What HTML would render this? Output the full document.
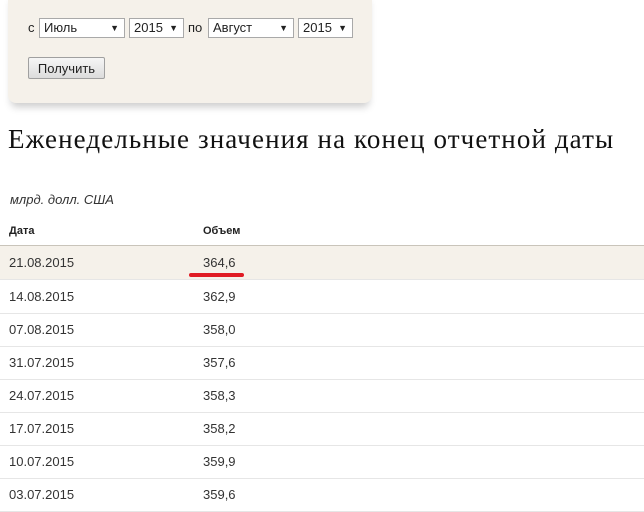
<!DOCTYPE html>
<html><head><meta charset="utf-8"><style>
body{margin:0;background:#fff;font-family:"Liberation Sans",Arial,sans-serif;width:644px;height:509px;overflow:hidden;position:relative;color:#222}
.box{position:absolute;left:8px;top:-10px;width:364px;height:113px;background:#f5f1ea;border-radius:8px;box-shadow:0 7px 8px -3px rgba(0,0,0,.2)}
.a{position:absolute;font-size:13px}
.sel{position:absolute;top:18px;border:1px solid #a9a9a9;background:#fff;font-size:13px;line-height:18px;padding-left:4px;box-sizing:border-box;height:20px}
.sel span{position:absolute;right:5px;top:0;font-size:9px}
.btn{position:absolute;left:28px;top:57px;width:77px;height:22px;border:1px solid #a0a0a0;border-radius:2px;background:linear-gradient(#f6f6f6,#dcdcdc);font-size:13px;text-align:center;line-height:21px;box-sizing:border-box}
h1{position:absolute;left:8px;top:124px;margin:0;font:27px "Liberation Serif",serif;letter-spacing:1.1px;color:#111;white-space:nowrap}
.row{position:absolute;left:0;width:644px;height:33px;border-bottom:1px solid #e6e6e6;font-size:13px;color:#333}
.row div{position:absolute;top:9px}
</style></head><body>
<div class="box"></div>
<div class="a" style="left:28px;top:20px">с</div>
<div class="sel" style="left:39px;width:86px">Июль<span>▼</span></div>
<div class="sel" style="left:129px;width:55px">2015<span>▼</span></div>
<div class="a" style="left:188px;top:20px">по</div>
<div class="sel" style="left:208px;width:86px">Август<span>▼</span></div>
<div class="sel" style="left:298px;width:55px">2015<span>▼</span></div>
<div class="btn">Получить</div>
<h1>Еженедельные значения на конец отчетной даты</h1>
<div class="a" style="left:10px;top:192px;font-style:italic;color:#333">млрд. долл. США</div>
<div class="a" style="left:9px;top:225px;font-size:11px;font-weight:bold">Дата</div>
<div class="a" style="left:203px;top:225px;font-size:11px;font-weight:bold">Объем</div>
<div style="position:absolute;left:0;top:245px;width:644px;height:1px;background:#c9c4ba"></div>
<div class="row" style="top:246px;background:#f5f1ea"><div style="left:9px">21.08.2015</div><div style="left:203px">364,6</div></div>
<div style="position:absolute;left:189px;top:273px;width:55px;height:4px;border-radius:2px;background:#e01b24"></div>
<div class="row" style="top:280px"><div style="left:9px">14.08.2015</div><div style="left:203px">362,9</div></div>
<div class="row" style="top:313px"><div style="left:9px">07.08.2015</div><div style="left:203px">358,0</div></div>
<div class="row" style="top:346px"><div style="left:9px">31.07.2015</div><div style="left:203px">357,6</div></div>
<div class="row" style="top:379px"><div style="left:9px">24.07.2015</div><div style="left:203px">358,3</div></div>
<div class="row" style="top:412px"><div style="left:9px">17.07.2015</div><div style="left:203px">358,2</div></div>
<div class="row" style="top:445px"><div style="left:9px">10.07.2015</div><div style="left:203px">359,9</div></div>
<div class="row" style="top:478px"><div style="left:9px">03.07.2015</div><div style="left:203px">359,6</div></div>
</body></html>
